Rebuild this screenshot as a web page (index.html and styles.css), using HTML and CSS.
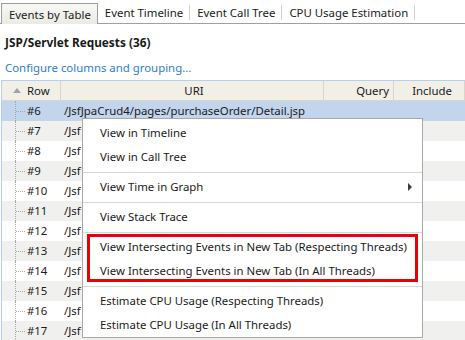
FILE: index.html
```html
<!DOCTYPE html>
<html lang="en">
<head>
  <meta charset="UTF-8" />
  <title>Events by Table</title>
  <link rel="stylesheet" href="styles.css">
</head>
<body>
  <div class="tabs">
    <div class="tab active">Events by Table</div>
    <div class="tab">Event Timeline</div>
    <div class="tab">Event Call Tree</div>
    <div class="tab">CPU Usage Estimation</div>
  </div>

  <div class="panel">
    <div class="title">JSP/Servlet Requests (36)</div>
    <a class="config-link" href="#">Configure columns and grouping...</a>
  </div>

  <div class="table">
    <div class="row head">
      <div class="cell c-row"><span class="sort-arrow"></span>Row</div>
      <div class="cell c-uri">URI</div>
      <div class="cell c-query">Query</div>
      <div class="cell c-incl">Include</div>
    </div>
    <div class="row selected"><div class="cell c-row"><span class="tree"></span>#6</div><div class="cell c-uri">/JsfJpaCrud4/pages/purchaseOrder/Detail.jsp</div><div class="cell c-query"></div><div class="cell c-incl"></div></div>
    <div class="row alt"><div class="cell c-row"><span class="tree"></span>#7</div><div class="cell c-uri">/Jsf</div><div class="cell c-query"></div><div class="cell c-incl"></div></div>
    <div class="row"><div class="cell c-row"><span class="tree"></span>#8</div><div class="cell c-uri">/Jsf</div><div class="cell c-query"></div><div class="cell c-incl"></div></div>
    <div class="row alt"><div class="cell c-row"><span class="tree"></span>#9</div><div class="cell c-uri">/Jsf</div><div class="cell c-query"></div><div class="cell c-incl"></div></div>
    <div class="row"><div class="cell c-row"><span class="tree"></span>#10</div><div class="cell c-uri">/Jsf</div><div class="cell c-query"></div><div class="cell c-incl"></div></div>
    <div class="row alt"><div class="cell c-row"><span class="tree"></span>#11</div><div class="cell c-uri">/Jsf</div><div class="cell c-query"></div><div class="cell c-incl"></div></div>
    <div class="row"><div class="cell c-row"><span class="tree"></span>#12</div><div class="cell c-uri">/Jsf</div><div class="cell c-query"></div><div class="cell c-incl"></div></div>
    <div class="row alt"><div class="cell c-row"><span class="tree"></span>#13</div><div class="cell c-uri">/Jsf</div><div class="cell c-query"></div><div class="cell c-incl"></div></div>
    <div class="row"><div class="cell c-row"><span class="tree"></span>#14</div><div class="cell c-uri">/Jsf</div><div class="cell c-query"></div><div class="cell c-incl"></div></div>
    <div class="row alt"><div class="cell c-row"><span class="tree"></span>#15</div><div class="cell c-uri">/Jsf</div><div class="cell c-query"></div><div class="cell c-incl"></div></div>
    <div class="row"><div class="cell c-row"><span class="tree"></span>#16</div><div class="cell c-uri">/Jsf</div><div class="cell c-query"></div><div class="cell c-incl"></div></div>
    <div class="row alt"><div class="cell c-row"><span class="tree"></span>#17</div><div class="cell c-uri">/Jsf</div><div class="cell c-query"></div><div class="cell c-incl"></div></div>
  </div>

  <!-- context menu over the table -->
  <div class="menu">
    <div class="item">View in Timeline</div>
    <div class="item">View in Call Tree</div>
    <div class="sep"></div>
    <div class="item has-sub">View Time in Graph<span class="sub-arrow"></span></div>
    <div class="sep"></div>
    <div class="item">View Stack Trace</div>
    <div class="sep"></div>
    <div class="highlight">
      <div class="item">View Intersecting Events in New Tab (Respecting Threads)</div>
      <div class="item">View Intersecting Events in New Tab (In All Threads)</div>
    </div>
    <div class="sep"></div>
    <div class="item">Estimate CPU Usage (Respecting Threads)</div>
    <div class="item">Estimate CPU Usage (In All Threads)</div>
  </div>
</body>
</html>
```

FILE: styles.css
```css
body {
  margin: 0;
  font-family: 'Noto Sans', sans-serif;
  font-size: 11.4px;
  color: #1a1a1a;
  background: #fff;
  overflow: hidden;
  height: 340px;
  position: relative;
}

/* === TABS === */
.tabs {
  display: flex;
  align-items: flex-end;
  height: 23px;
  border-bottom: 1px solid #a0a0a0;
}

.tab {
  height: 15px;
  line-height: 16px;
  padding: 0 6px 0 7px;
  margin-bottom: 3px;
  border-right: 1px solid #d0d0d0;
}

.tab.active {
  margin: 0 0 -1px 1px;
  height: 20px;
  line-height: 21px;
  padding: 0 6px 0 7px;
  border: 1px solid #9c9c9c;
  border-bottom: none;
  background: linear-gradient(#f7f7f4, #ebebe4);
}

/* === PANEL HEADER === */
.panel {
  padding: 10px 5px 0;
}

.title {
  font-weight: bold;
  font-size: 11.8px;
  height: 25px;
  line-height: 17px;
}

.config-link {
  display: block;
  color: #2a7dd1;
  text-decoration: none;
  height: 21px;
  line-height: 17px;
}

/* === TABLE === */
.table {
  margin-left: 1px;
  border-top: 1px solid #b5cfee;
  border-left: 1px solid #b5cfee;
}

.row {
  display: flex;
  height: 20px;
  line-height: 20px;
}

.row.alt { background: #f0f1ef; }
.row.selected { background: #c3d5ec; }

.row.head {
  background: #f1efe6;
  border-bottom: 1px solid #d8d5cb;
  height: 19px;
  line-height: 19px;
}

.cell {
  white-space: nowrap;
}

.head .cell { border-right: 1px solid #d8d5cb; }

.c-row { width: 58px; position: relative; }
.c-uri { width: 258px; padding-left: 4px; }
.c-query { width: 65px; padding-right: 4px; text-align: right; }
.c-incl { flex: 1; padding-right: 12px; text-align: right; }

.head .c-uri { text-align: center; }
.head .c-row { padding-left: 25px; width: 33px; }

.sort-arrow {
  position: absolute;
  left: 11px;
  top: 7px;
  border-left: 4px solid transparent;
  border-right: 4px solid transparent;
  border-bottom: 5px solid #a3a3a3;
}

.tree {
  display: inline-block;
  width: 10px;
  height: 20px;
  margin-left: 13px;
  margin-right: 1px;
  vertical-align: top;
  border-left: 1px dotted #a8a8a8;
  background: linear-gradient(to right, #a8a8a8 50%, transparent 50%) 0 10px / 2px 1px repeat-x;
}

/* === CONTEXT MENU === */
.menu {
  position: absolute;
  left: 82px;
  top: 118px;
  width: 339px;
  background: #fff;
  border: 1px solid #a9a9a9;
  padding-top: 2px;
}

.item {
  height: 24px;
  line-height: 24px;
  padding-left: 17px;
  white-space: nowrap;
  position: relative;
}

.sep {
  height: 1px;
  margin: 3px 0 2px;
  background: #d7d7d7;
}

.sub-arrow {
  position: absolute;
  right: 10px;
  top: 8px;
  border-top: 4px solid transparent;
  border-bottom: 4px solid transparent;
  border-left: 4px solid #3c3c3c;
}

.highlight {
  position: relative;
}

.highlight::after {
  content: "";
  position: absolute;
  left: 4px;
  right: 4px;
  top: -1px;
  bottom: 1px;
  border: 3px solid #e8000d;
}
```
